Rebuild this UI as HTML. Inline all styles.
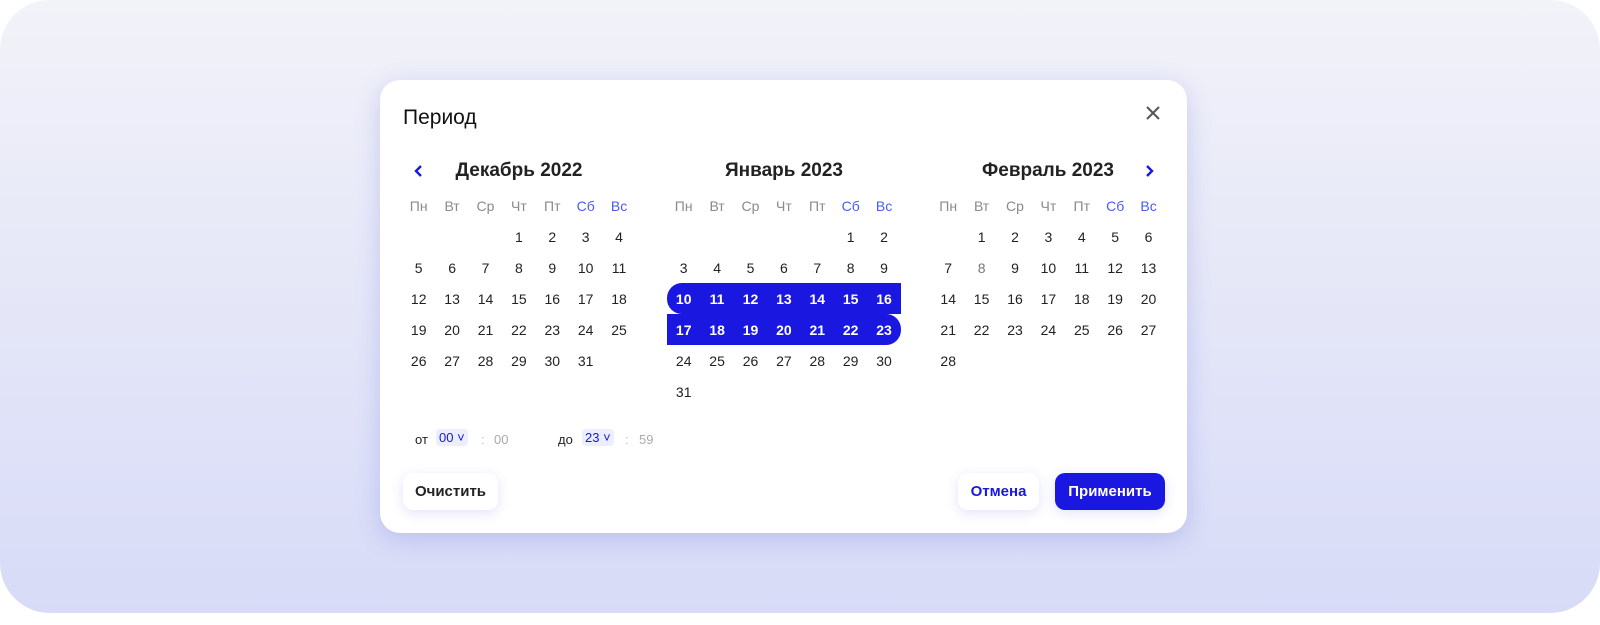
<!DOCTYPE html>
<html><head><meta charset="utf-8"><style>
*{margin:0;padding:0;box-sizing:border-box}
html,body{width:1600px;height:625px;background:#fff;overflow:hidden}
body{font-family:"Liberation Sans",sans-serif;position:relative}
.bg{position:absolute;left:0;top:0;width:1600px;height:613px;border-radius:50px;background:linear-gradient(#f2f2f9,#d7dbf7)}
.modal{position:absolute;left:380px;top:80px;width:807px;height:453px;background:#fff;border-radius:20px;box-shadow:0 6px 24px rgba(90,100,220,.25)}
.abs{position:absolute}
.title{left:403px;top:106px;font-size:21px;color:#111}
.mon{top:160px;font-size:19px;font-weight:bold;color:#222;width:240px;text-align:center}
.grid{position:absolute;top:190px;display:grid;grid-template-columns:repeat(7,33.4px);grid-auto-rows:31px;font-size:14px;color:#222}
.grid span{display:flex;align-items:center;justify-content:center}
.h{color:#8a8a8a}.w{color:#4a5cf0}
.s{background:#1a17e0;color:#fff;font-weight:bold}
.btn{position:absolute;top:473px;height:37px;border-radius:10px;font-weight:bold;font-size:15px;display:flex;align-items:center;justify-content:center;background:#fff;box-shadow:0 3px 12px rgba(90,100,220,.18)}
.sel{background:#ecedfd;color:#1a17e0;border-radius:4px;padding:1px 3px;font-size:13px}
.t{top:432px;font-size:13px}
</style></head><body>
<div class="bg"></div>
<div class="modal"></div>
<div class="abs title">Период</div>
<svg class="abs" style="left:1145px;top:105px" width="16" height="16"><path d="M2 2L14 14M14 2L2 14" stroke="#555" stroke-width="2"/></svg>
<svg class="abs" style="left:413px;top:164px" width="12" height="14"><path d="M8 2L3 7L8 12" stroke="#1a17e0" stroke-width="2.4" fill="none"/></svg>
<svg class="abs" style="left:1143px;top:164px" width="12" height="14"><path d="M4 2L9 7L4 12" stroke="#1a17e0" stroke-width="2.4" fill="none"/></svg>
<div class="abs mon" style="left:399px">Декабрь 2022</div>
<div class="abs mon" style="left:664px">Январь 2023</div>
<div class="abs mon" style="left:928px">Февраль 2023</div>
<div class="grid" style="left:402px">
<span class="h">Пн</span><span class="h">Вт</span><span class="h">Ср</span><span class="h">Чт</span><span class="h">Пт</span><span class="w">Сб</span><span class="w">Вс</span>
<span></span><span></span><span></span><span>1</span><span>2</span><span>3</span><span>4</span>
<span>5</span><span>6</span><span>7</span><span>8</span><span>9</span><span>10</span><span>11</span>
<span>12</span><span>13</span><span>14</span><span>15</span><span>16</span><span>17</span><span>18</span>
<span>19</span><span>20</span><span>21</span><span>22</span><span>23</span><span>24</span><span>25</span>
<span>26</span><span>27</span><span>28</span><span>29</span><span>30</span><span>31</span><span></span>
</div>
<div class="grid" style="left:667px">
<span class="h">Пн</span><span class="h">Вт</span><span class="h">Ср</span><span class="h">Чт</span><span class="h">Пт</span><span class="w">Сб</span><span class="w">Вс</span>
<span></span><span></span><span></span><span></span><span></span><span>1</span><span>2</span>
<span>3</span><span>4</span><span>5</span><span>6</span><span>7</span><span>8</span><span>9</span>
<span class="s" style="border-radius:15px 0 0 15px">10</span><span class="s">11</span><span class="s">12</span><span class="s">13</span><span class="s">14</span><span class="s">15</span><span class="s">16</span>
<span class="s">17</span><span class="s">18</span><span class="s">19</span><span class="s">20</span><span class="s">21</span><span class="s">22</span><span class="s" style="border-radius:0 15px 15px 0">23</span>
<span>24</span><span>25</span><span>26</span><span>27</span><span>28</span><span>29</span><span>30</span>
<span>31</span>
</div>
<div class="grid" style="left:931.5px">
<span class="h">Пн</span><span class="h">Вт</span><span class="h">Ср</span><span class="h">Чт</span><span class="h">Пт</span><span class="w">Сб</span><span class="w">Вс</span>
<span></span><span>1</span><span>2</span><span>3</span><span>4</span><span>5</span><span>6</span>
<span>7</span><span style="color:#777">8</span><span>9</span><span>10</span><span>11</span><span>12</span><span>13</span>
<span>14</span><span>15</span><span>16</span><span>17</span><span>18</span><span>19</span><span>20</span>
<span>21</span><span>22</span><span>23</span><span>24</span><span>25</span><span>26</span><span>27</span>
<span>28</span>
</div>
<div class="abs t" style="left:415px;color:#222">от</div>
<div class="abs t" style="left:436px;top:430px"><span class="sel">00 ˅</span></div>
<div class="abs t" style="left:481px;color:#bbb">:</div>
<div class="abs t" style="left:494px;color:#aaa">00</div>
<div class="abs t" style="left:558px;color:#222">до</div>
<div class="abs t" style="left:582px;top:430px"><span class="sel">23 ˅</span></div>
<div class="abs t" style="left:625px;color:#bbb">:</div>
<div class="abs t" style="left:639px;color:#aaa">59</div>
<div class="btn" style="left:403px;width:95px;color:#222">Очистить</div>
<div class="btn" style="left:958px;width:81px;color:#1a17e0">Отмена</div>
<div class="btn" style="left:1055px;width:110px;background:#1a17e0;color:#fff">Применить</div>
</body></html>
